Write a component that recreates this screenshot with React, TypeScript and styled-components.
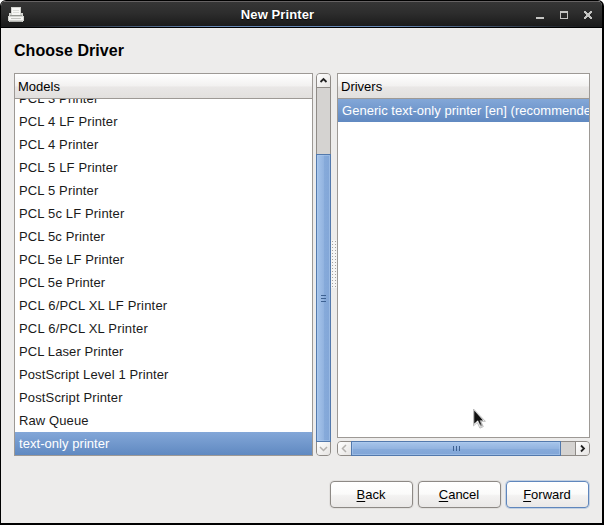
import React from "react";
import styled, { createGlobalStyle, css } from "styled-components";

const Global = createGlobalStyle`
  *, *::before, *::after { box-sizing: border-box; }
  body { margin: 0; background: #fff; overflow: hidden; }
`;

const selection = "linear-gradient(#83a7d8, #6089c1)";

const Window = styled.div`
  width: 604px;
  height: 525px;
  display: flex;
  flex-direction: column;
  background: #edeceb;
  border: solid #000;
  border-width: 1px 2px 2px 1px;
  border-radius: 6px 6px 0 0;
  overflow: hidden;
  font-family: "Liberation Sans", Arial, sans-serif;
  font-size: 13px;
  color: #1a1a1a;
  cursor: default;
`;

const TitleBar = styled.header`
  height: 27px;
  flex: none;
  display: grid;
  grid-template-columns: 72px 1fr 72px;
  align-items: center;
  color: #fff;
  background:
    linear-gradient(#000, #000) 0 26px / 100% 1px no-repeat,
    linear-gradient(90deg, #1b1c1e 3%, #6687b5 35%, #6687b5 65%, #1b1c1e 97%) 0 25px / 100% 1px no-repeat,
    linear-gradient(#666364 0, #666364 1px, #363636 1px, #2d2d2d 12px, #1b1b1b 25px);
`;

const TitleIcon = styled.svg`
  display: block;
  align-self: start;
  margin: 6px 0 0 7px;
`;

const Title = styled.h1`
  margin: 0;
  padding-right: 48px;
  padding-top: 1px;
  text-align: center;
  font-size: 13px;
  line-height: 16px;
  font-weight: bold;
  letter-spacing: 0.1px;
  text-shadow: 0 1px 1px #000;
`;

const Controls = styled.svg`
  display: block;
`;

const Heading = styled.h2`
  margin: 0;
  padding: 13px 0 0 13px;
  height: 45px;
  flex: none;
  font-size: 16px;
  line-height: 20px;
  letter-spacing: 0.05px;
  color: #000;
`;

const Panes = styled.main`
  height: 383px;
  flex: none;
  display: flex;
  padding: 0 12px 0 13px;
`;

const Tree = styled.section<{ $height: number; $width: number }>`
  width: ${(p) => p.$width}px;
  height: ${(p) => p.$height}px;
  flex: none;
  display: flex;
  flex-direction: column;
  border: 1px solid #9d9995;
  background: #fff;
  overflow: hidden;
`;

const ColumnHeader = styled.div`
  height: 25px;
  flex: none;
  padding-left: 3px;
  line-height: 25px;
  color: #000;
  border-bottom: 1px solid #9d9995;
  background: linear-gradient(#fff, #f2f1f0 50%, #e9e7e6 54%, #e2e0de);
`;

const Rows = styled.ul<{ $toEnd?: boolean }>`
  list-style: none;
  margin: 0;
  padding: 0;
  flex: 1;
  min-height: 0;
  display: flex;
  flex-direction: column;
  justify-content: ${(p) => (p.$toEnd ? "flex-end" : "flex-start")};
  overflow: hidden;
`;

const Row = styled.li<{ $selected?: boolean; $tracking: number }>`
  height: 23px;
  flex: none;
  padding-left: 4px;
  line-height: 23px;
  letter-spacing: ${(p) => p.$tracking}px;
  white-space: nowrap;
  ${(p) =>
    p.$selected &&
    css`
      color: #fff;
      background: ${selection};
    `}
`;

const ScrollBar = styled.div<{ $vertical?: boolean }>`
  flex: none;
  display: flex;
  flex-direction: ${(p) => (p.$vertical ? "column" : "row")};
  width: ${(p) => (p.$vertical ? "15px" : "253px")};
  height: ${(p) => (p.$vertical ? "383px" : "15px")};
  margin: ${(p) => (p.$vertical ? "0 0 0 3px" : "3px 0 0")};
  border: 1px solid #8f8b87;
  border-radius: 4px;
  background: #d5d3d1;
`;

const Arrow = styled.svg<{ $edge: "top" | "bottom" | "left" | "right" }>`
  display: block;
  flex: none;
  width: 13px;
  height: 13px;
  background: linear-gradient(135deg, #fff, #e6e4e2);
  border-radius: ${(p) =>
    ({ top: "3px 3px 0 0", bottom: "0 0 3px 3px", left: "3px 0 0 3px", right: "0 3px 3px 0" })[p.$edge]};
  box-shadow: ${(p) =>
    ({ top: "0 1px", bottom: "0 0", left: "0 0", right: "-1px 0" })[p.$edge]} #8f8b87;
`;

const Trough = styled.div<{ $size: number }>`
  flex: 0 0 ${(p) => p.$size}px;
`;

const Thumb = styled.div<{ $vertical?: boolean }>`
  flex: 1;
  display: flex;
  flex-direction: ${(p) => (p.$vertical ? "column" : "row")};
  align-items: center;
  justify-content: center;
  gap: 2px;
  margin: ${(p) => (p.$vertical ? "0 -1px" : "-1px 0")};
  border: 1px solid #5379ac;
  box-shadow: inset 0 0 0 1px rgba(180, 208, 242, 0.45);
  background: linear-gradient(${(p) => (p.$vertical ? "90deg" : "180deg")}, #a7c5eb, #93b4e0 50%, #86aada 55%, #82a6d7);
`;

const Grip = styled.i<{ $vertical?: boolean }>`
  width: ${(p) => (p.$vertical ? "5px" : "1px")};
  height: ${(p) => (p.$vertical ? "1px" : "5px")};
  background: #3d6191;
`;

const Splitter = styled.div`
  width: 6px;
  height: 48px;
  flex: none;
  margin-top: 167px;
  background:
    repeating-linear-gradient(#f6f5f4 0 1px, transparent 1px 2px, #f6f5f4 2px 3px),
    repeating-linear-gradient(90deg, #f6f5f4 0 1px, #a5a29f 1px 2px, #f6f5f4 2px 3px);
`;

const DriverPane = styled.div`
  display: flex;
  flex-direction: column;
`;

const Actions = styled.footer`
  display: flex;
  justify-content: flex-end;
  gap: 5px;
  padding: 25px 13px 0 0;
`;

const Button = styled.button<{ $default?: boolean }>`
  width: 83px;
  height: 27px;
  padding: 0 1px 0 0;
  font: inherit;
  color: #000;
  border: 1px solid ${(p) => (p.$default ? "#5f86bc" : "#8d8985")};
  border-radius: 4px;
  background: linear-gradient(#fff, #fbfbfa 48%, #f3f2f1 55%, #eae8e7);
  box-shadow: ${(p) => (p.$default ? "0 0 0 1px #c3d0e1" : "0 0 0 1px #e2e0de")};
`;

const Mnemonic = styled.span`
  text-decoration: underline;
  text-decoration-thickness: 1px;
  text-underline-offset: 2px;
`;

const Pointer = styled.svg`
  position: absolute;
  left: 472px;
  top: 408px;
`;

const models: { name: string; tracking: number }[] = [
  { name: "PCL 3 Printer", tracking: 0.14 },
  { name: "PCL 4 LF Printer", tracking: 0.15 },
  { name: "PCL 4 Printer", tracking: 0.14 },
  { name: "PCL 5 LF Printer", tracking: 0.15 },
  { name: "PCL 5 Printer", tracking: 0.14 },
  { name: "PCL 5c LF Printer", tracking: 0.15 },
  { name: "PCL 5c Printer", tracking: 0.14 },
  { name: "PCL 5e LF Printer", tracking: 0.1 },
  { name: "PCL 5e Printer", tracking: 0.1 },
  { name: "PCL 6/PCL XL LF Printer", tracking: 0.2 },
  { name: "PCL 6/PCL XL Printer", tracking: 0.2 },
  { name: "PCL Laser Printer", tracking: 0.1 },
  { name: "PostScript Level 1 Printer", tracking: 0.11 },
  { name: "PostScript Printer", tracking: 0.14 },
  { name: "Raw Queue", tracking: 0.1 },
  { name: "text-only printer", tracking: 0.05 },
];

const arrows = {
  top: "M3.5 8 6.5 5 9.5 8",
  bottom: "M3 5 6.5 8.5 10 5",
  left: "M8 3 4.5 6.5 8 10",
  right: "M5 3.5 8 6.5 5 9.5",
};

function ArrowButton({ edge, disabled }: { edge: keyof typeof arrows; disabled?: boolean }) {
  return (
    <Arrow $edge={edge} viewBox="0 0 13 13">
      <path d={arrows[edge]} fill="none" stroke={disabled ? "#b4b1ae" : "#222"} strokeWidth={disabled ? 1.5 : 1.8} />
    </Arrow>
  );
}

function ScrollThumb({ vertical }: { vertical?: boolean }) {
  return (
    <Thumb $vertical={vertical}>
      <Grip $vertical={vertical} />
      <Grip $vertical={vertical} />
      <Grip $vertical={vertical} />
    </Thumb>
  );
}

export default function App() {
  return (
    <>
      <Global />
      <Window>
        <TitleBar>
          <TitleIcon width="16" height="16" viewBox="0 0 16 16" shapeRendering="crispEdges">
            <path d="M3 0h10v6h2v3h1v5h-1v1H1v-1H0V9h1V6h2z" fill="#d3d4d0" />
            <path d="M4 1h8v7H4z" fill="#f7f7f5" />
            <path d="M5 3h6v1H5zM5 5h6v1H5z" fill="#dcddd9" />
            <path d="M2 8h12v1H2z" fill="#969893" />
            <path d="M1 10h14v3H1z" fill="#f4f4f2" />
            <path d="M3 11h10v1H3z" fill="#c4c5c1" />
            <path d="M2 14h12v1H2z" fill="#b0b1ad" />
          </TitleIcon>
          <Title>New Printer</Title>
          <Controls width="72" height="27" viewBox="1 0 72 27" shapeRendering="crispEdges">
            <path d="M7 16h8v2H7z" fill="#c5c5c3" />
            <path d="M31 10h8v8h-8zM32 12v5h6v-5z" fill="#c5c5c3" fillRule="evenodd" />
            <path
              d="M55 10h2v1h1v1h2v-1h1v-1h2v2h-1v1h-1v2h1v1h1v2h-2v-1h-1v-1h-2v1h-1v1h-2v-2h1v-1h1v-2h-1v-1h-1z"
              fill="#c5c5c3"
            />
          </Controls>
        </TitleBar>
        <Heading>Choose Driver</Heading>
        <Panes>
          <Tree $width={299} $height={383}>
            <ColumnHeader>Models</ColumnHeader>
            <Rows $toEnd>
              {models.map(({ name, tracking }) => (
                <Row key={name} $tracking={tracking} $selected={name === "text-only printer"}>
                  {name}
                </Row>
              ))}
            </Rows>
          </Tree>
          <ScrollBar $vertical>
            <ArrowButton edge="top" />
            <Trough $size={67} />
            <ScrollThumb vertical />
            <ArrowButton edge="bottom" disabled />
          </ScrollBar>
          <Splitter />
          <DriverPane>
            <Tree $width={253} $height={365}>
              <ColumnHeader>Drivers</ColumnHeader>
              <Rows>
                <Row $selected $tracking={0.03}>
                  Generic text-only printer [en] (recommended)
                </Row>
              </Rows>
            </Tree>
            <ScrollBar>
              <ArrowButton edge="left" disabled />
              <ScrollThumb />
              <Trough $size={15} />
              <ArrowButton edge="right" />
            </ScrollBar>
          </DriverPane>
        </Panes>
        <Actions>
          <Button><Mnemonic>B</Mnemonic>ack</Button>
          <Button><Mnemonic>C</Mnemonic>ancel</Button>
          <Button $default><Mnemonic>F</Mnemonic>orward</Button>
        </Actions>
      </Window>
      <Pointer width="16" height="22" viewBox="0 0 16 22">
        <defs>
          <linearGradient id="tail" x1="0" y1="0" x2="0" y2="1">
            <stop offset=".55" stopColor="#111" />
            <stop offset="1" stopColor="#eee" />
          </linearGradient>
        </defs>
        <path d="M1.5 1v16.8l3.8-3.3 2.6 5.6 3.4-1.5-2.5-5.3h4.6z" fill="#fff" stroke="#b5b5b5" strokeWidth=".9" />
        <path d="M5.5 11.5l3.2 7.3 1.6-.7-3.2-7.3z" fill="url(#tail)" stroke="#999" strokeWidth=".4" />
        <path d="M2.2 2.6v13.2l3.4-3.2h5.6z" fill="#111" />
      </Pointer>
    </>
  );
}
